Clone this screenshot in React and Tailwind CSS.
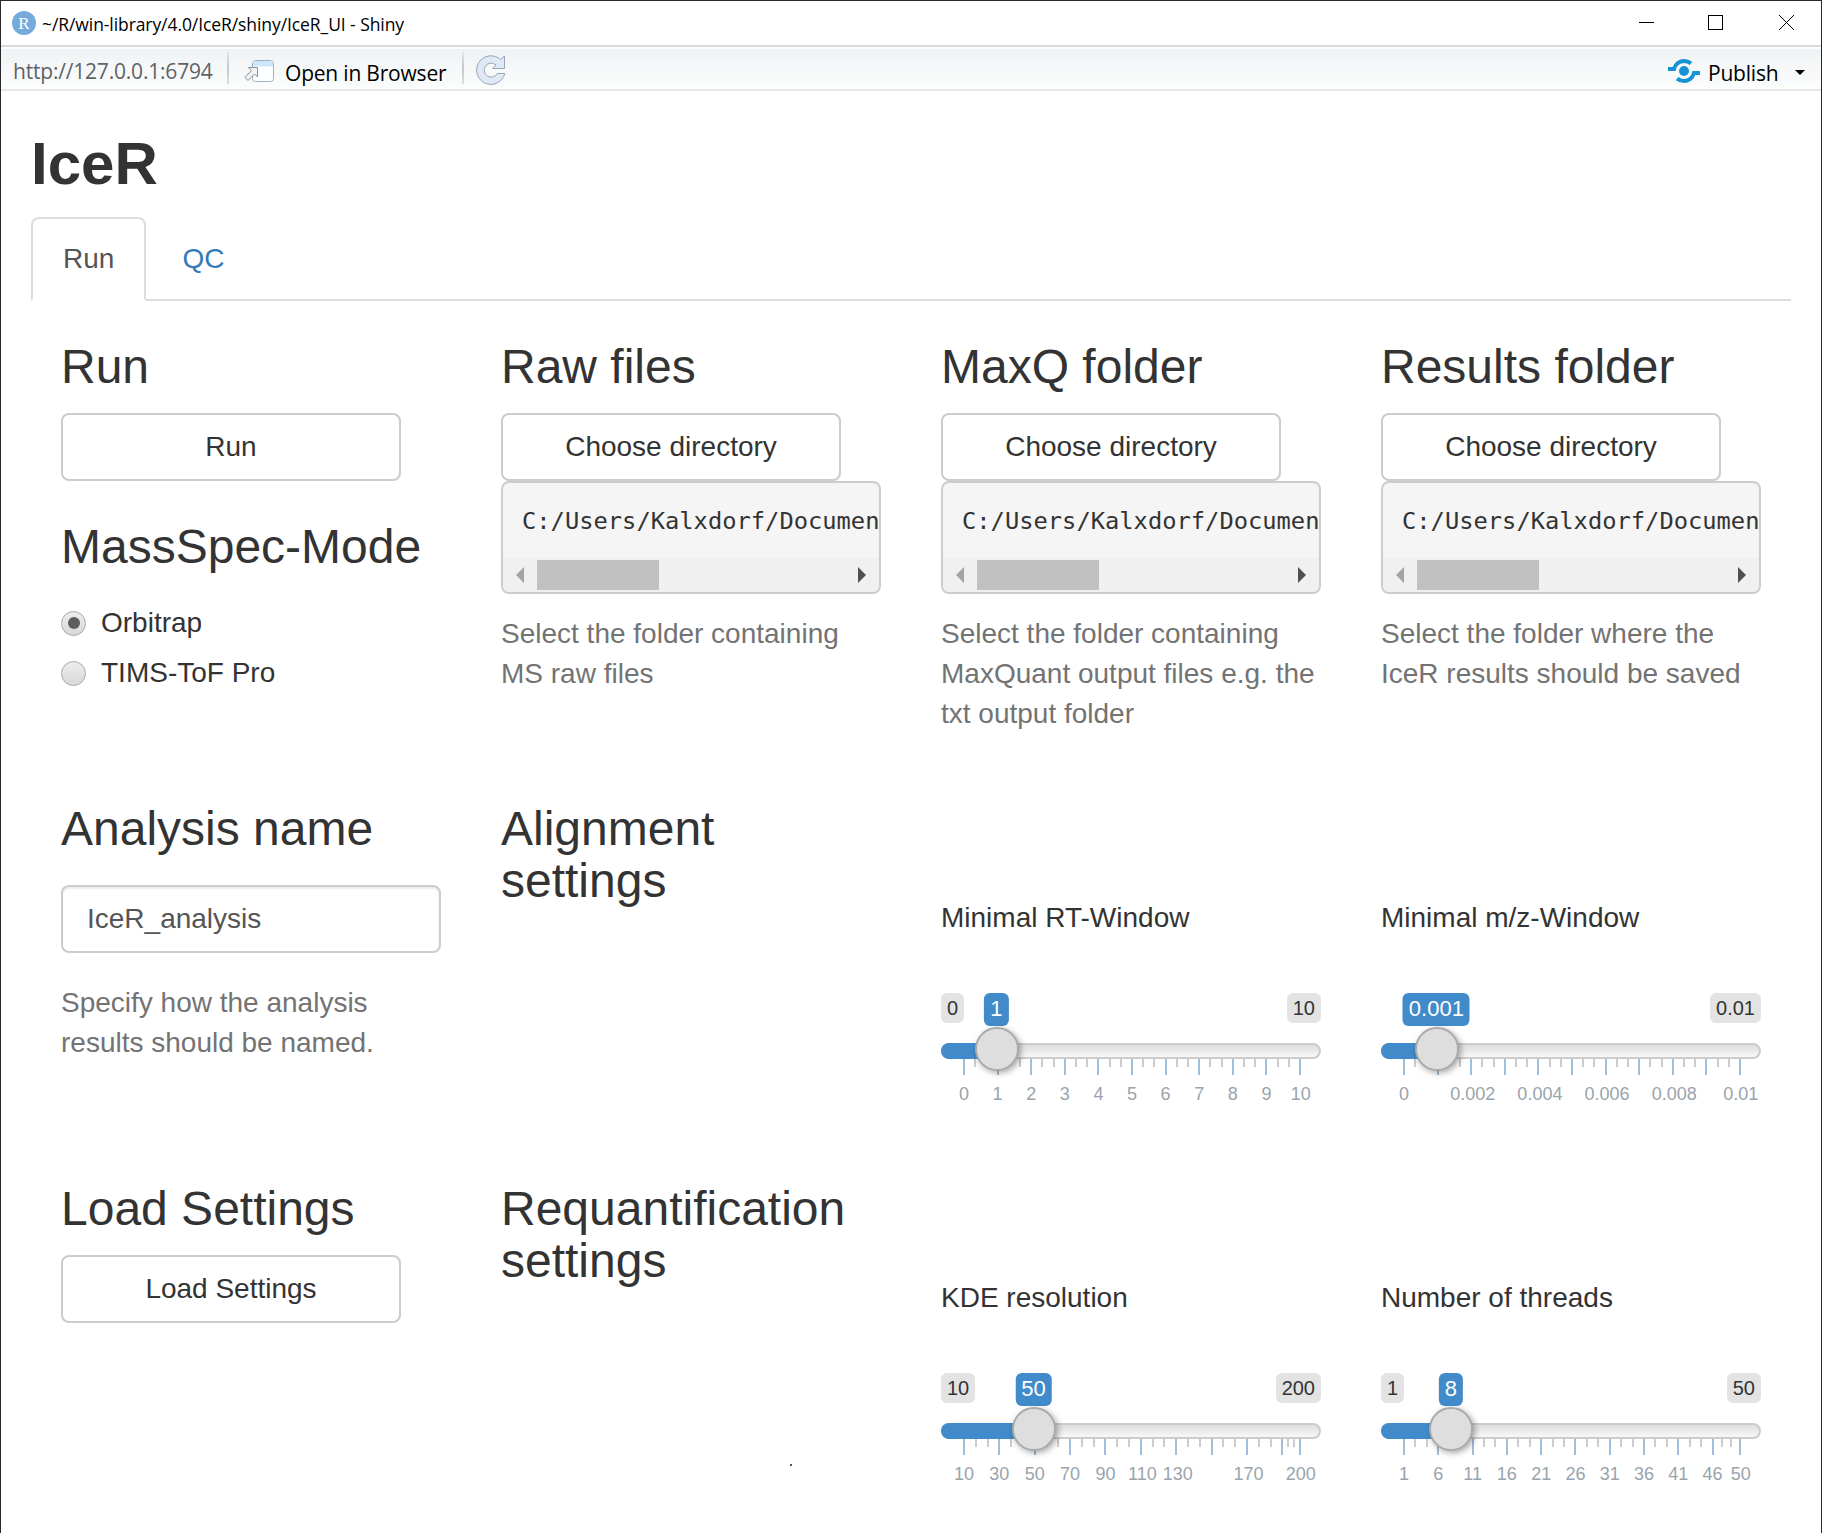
import React from "react";

const SANS = "font-['Liberation_Sans',Arial,sans-serif]";
const UI = "font-['Open_Sans','Noto_Sans',sans-serif]";

function TitleBar() {
  return (
    <div className={`flex h-11 shrink-0 items-center bg-white pl-[11px] text-black ${UI}`}>
      <div className="flex h-6 w-6 items-center justify-center rounded-full bg-[#75aadb] font-['Liberation_Serif',serif] text-[17px] leading-none text-white">
        R
      </div>
      <span className="ml-[6px] mt-[3px] whitespace-nowrap text-[17.5px] leading-none tracking-[-0.08px]">
        ~/R/win-library/4.0/IceR/shiny/IceR_UI - Shiny
      </span>
      <svg className="ml-auto" width="184" height="44" viewBox="1637 1 184 44" fill="none" stroke="#000" strokeWidth="1">
        <path d="M1639 22.5h15" />
        <rect x="1708.5" y="15.5" width="14" height="14" />
        <path d="M1779 15l15 15M1794 15l-15 15" />
      </svg>
    </div>
  );
}

function Divider({ className }) {
  return <div className={`h-8 w-[2px] bg-linear-to-b from-[#e4e6e8] via-[#c4c7ca] to-[#dcdfe1] ${className}`} />;
}

function ToolBar() {
  return (
    <div className={`flex h-[46px] shrink-0 items-center border-t-2 border-b-2 border-t-[#d9dadb] border-b-[#e6e8ea] bg-linear-to-b from-[#eff2f4] to-[#fcfdfd] pl-3 text-black shadow-[inset_0_2px_0_#fbfcfc] ${UI}`}>
      <span className="mt-[7px] w-[201px] whitespace-nowrap text-[21px] leading-none tracking-[-0.2px] text-[#5f6366]">http://127.0.0.1:6794</span>
      <Divider className="ml-[13px]" />
      <svg className="ml-[14px] mt-[6px]" width="32" height="26" viewBox="0 0 32 26">
        <rect x="9.5" y="2.5" width="21" height="21" rx="3" fill="#fdfeff" stroke="#9fb0c4" />
        <path d="M10 8.500V5.600A2.600 2.600 0 0 1 12.600 3h14.800A2.600 2.600 0 0 1 30 5.600v2.900z" fill="#cfe6fa" />
        <path d="M5.500 9.500h9v9.500l-3-3L5 22.500l-3.200-3.200L8.500 12.700z" fill="#f2f3f5" stroke="#8b9099" />
      </svg>
      <span className="ml-[10px] mt-[10px] w-[161px] whitespace-nowrap text-[21px] leading-none tracking-[-0.2px]">Open in Browser</span>
      <Divider className="ml-4" />
      <svg className="ml-[11px] mt-1" width="32" height="32" viewBox="0 0 32 32">
        <path
          d="M29.500 2V14.500H17.500L21 11A7 7 0 1 0 22.300 19.500H29.800A14.300 14.300 0 1 1 25.500 5.500z"
          fill="#e1e8f5"
          stroke="#9aa5b8"
        />
      </svg>
      <svg className="ml-auto mt-[6px]" width="34" height="28" viewBox="0 0 34 28" fill="none" stroke="#1593d6">
        <circle cx="17" cy="14" r="5" fill="#1593d6" stroke="none" />
        <path d="M1 12h6C8.500 6.500 13 4 17 4c3 0 5 .8 7 2.300" strokeWidth="4" />
        <path d="M33 16h-6C25.500 21.500 21 24 17 24c-3 0-5-.8-7-2.300" strokeWidth="4" />
      </svg>
      <span className="ml-[7px] mt-[10px] w-[71px] whitespace-nowrap text-[21px] leading-none tracking-[-0.2px]">Publish</span>
      <svg className="ml-4 mt-[9px] mr-4" width="10" height="5" viewBox="0 0 10 5">
        <path d="M0 0h10L5 5z" fill="#000" />
      </svg>
    </div>
  );
}

function Heading({ children }) {
  return <h3 className="mt-10 mb-[19.400px] text-5xl leading-[52.8px] font-normal">{children}</h3>;
}

function Button({ children }) {
  return (
    <button className="block h-[68px] w-[340px] rounded-lg border-2 border-[#ccc] bg-white text-center leading-10">
      {children}
    </button>
  );
}

function Help({ children, className = "" }) {
  return <p className={`text-[#737373] ${className}`}>{children}</p>;
}

function Radio({ label, checked }) {
  return (
    <label className="flex h-10 items-center">
      <span className="mt-[1px] flex h-[25px] w-[25px] items-center justify-center rounded-full border border-[#a9a9a9] bg-linear-to-b from-[#ededed] to-[#d9d9d9]">
        {checked && <span className="h-3 w-3 rounded-full bg-[#5e5e5e]" />}
      </span>
      <span className="ml-[15px]">{label}</span>
    </label>
  );
}

function DirectoryColumn({ title, help }) {
  return (
    <section className="w-[380px]">
      <Heading>{title}</Heading>
      <Button>Choose directory</Button>
      <div className="h-[112.400px] overflow-hidden rounded-lg border-2 border-[#ccc] bg-[#f5f5f5]">
        <pre className="h-[75px] overflow-hidden pl-[19px] pt-[17.400px] font-['DejaVu_Sans_Mono',monospace] text-[23.75px] leading-10">
          C:/Users/Kalxdorf/Documen
        </pre>
        <div className="flex h-[34px] items-center bg-[#f0f0f0] pr-[13px] pl-[13px]">
          <svg width="8" height="16" viewBox="0 0 8 16"><path d="M8 0v16L0 8z" fill="#a3a3a3" /></svg>
          <div className="ml-[13px] h-[30px] w-[122px] bg-[#c1c1c1]" />
          <svg className="ml-auto" width="8" height="16" viewBox="0 0 8 16"><path d="M0 0v16l8-8z" fill="#505050" /></svg>
        </div>
      </div>
      <Help className="mt-5">{help}</Help>
    </section>
  );
}

function Slider({ label, min, max, step, value, labels }) {
  const at = (v) => 23 + ((v - min) / (max - min)) * 336;
  const majors = [];
  for (let i = 0; min + i * step < max - step * 0.01; i++) majors.push(min + i * step);
  majors.push(max);
  const minors = majors.slice(0, -1).flatMap((m, i) => {
    const gap = (majors[i + 1] - m) / 3;
    return [m + gap, m + 2 * gap];
  });
  const shown = labels.map((n) => ({ n, nudge: n === max ? 0.7 : String(n).length > 2 ? 1.5 : 0 }));
  const x = at(value);
  const overlapsMin = x < 60 && String(value).length > 3;
  return (
    <section className="w-[380px] pt-[135.400px]">
      <div>{label}</div>
      <div className="relative mt-[55.400px] h-[120px]">
        <div className="flex justify-between text-xl leading-[30px]">
          <span className={overlapsMin ? "invisible" : "rounded-md bg-[#e3e3e3] px-[6px]"}>{min}</span>
          <span className="rounded-md bg-[#e3e3e3] px-[6px]">{max}</span>
        </div>
        <div className="mt-5 h-4 overflow-hidden rounded-full border-2 border-[#ccc] bg-linear-to-b from-[#dedede] to-[#f8f8f8]" />
        <div className="absolute top-[50px] left-0 h-4 rounded-l-full bg-[#428bca]" style={{ width: x }} />
        {minors.map((m) => (
          <i key={`s${m}`} className="absolute top-[66px] h-2 w-[2px] bg-[#ccc]" style={{ left: Math.round(at(m) - 1) }} />
        ))}
        {majors.map((m) => (
          <i key={`b${m}`} className="absolute top-[66px] h-4 w-[2px] bg-[#9fc0dc]" style={{ left: Math.round(at(m) - 1) }} />
        ))}
        {shown.map(({ n, nudge }) => (
          <span key={n} className="absolute top-[91px] -translate-x-1/2 text-lg leading-5 text-[#99a4ac]" style={{ left: at(n) + nudge }}>
            {n}
          </span>
        ))}
        <span className="absolute top-0 h-[33px] -translate-x-1/2 rounded-md bg-[#428bca] px-[6px] text-[22px] leading-[32px] text-white" style={{ left: x - 1.2 }}>
          {value}
        </span>
        <span
          className="absolute top-[34px] h-11 w-11 -translate-x-1/2 rounded-full border-2 border-[#ababab] bg-[#dedede] shadow-[2px_2px_6px_rgba(0,0,0,0.35)]"
          style={{ left: x - 0.6 }}
        />
      </div>
    </section>
  );
}

export default function App() {
  return (
    <div className={`flex h-[1533px] w-[1822px] flex-col overflow-hidden border-x border-t border-[#26282b] bg-white text-[28px] leading-10 text-[#333] ${SANS}`}>
      <TitleBar />
      <ToolBar />
      <main className="flex flex-col px-[30px]">
        <h2 className="mt-10 mb-5 text-6xl leading-[66px] font-bold">IceR</h2>
        <nav className="flex h-[84px] border-b-2 border-[#ddd]">
          <a className="h-[84px] rounded-t-lg border-2 border-[#ddd] border-b-white bg-white px-[30px] pt-5 text-[#555]">Run</a>
          <a className="ml-1 px-8 pt-[22px] text-[#337ab7]">QC</a>
        </nav>

        <div className="grid h-[461.600px] grid-cols-[repeat(4,440px)] pl-[30px]">
          <section className="w-[380px]">
            <Heading>Run</Heading>
            <Button>Run</Button>
            <Heading>MassSpec-Mode</Heading>
            <div className="flex flex-col gap-[10px] pt-[9.400px]">
              <Radio label="Orbitrap" checked />
              <Radio label="TIMS-ToF Pro" />
            </div>
          </section>
          <DirectoryColumn title="Raw files" help="Select the folder containing MS raw files" />
          <DirectoryColumn title="MaxQ folder" help="Select the folder containing MaxQuant output files e.g. the txt output folder" />
          <DirectoryColumn title="Results folder" help="Select the folder where the IceR results should be saved" />
        </div>

        <div className="grid h-[380px] grid-cols-[repeat(4,440px)] pl-[30px]">
          <section className="w-[380px]">
            <Heading>Analysis name</Heading>
            <div className="mt-[30px] flex h-[68px] items-center rounded-lg border-2 border-[#ccc] px-6 text-[#555] shadow-[inset_0_2px_2px_rgba(0,0,0,0.075)]">
              IceR_analysis
            </div>
            <Help className="mt-[29.600px]">Specify how the analysis results should be named.</Help>
          </section>
          <section className="w-[380px]">
            <Heading>Alignment settings</Heading>
          </section>
          <Slider label="Minimal RT-Window" min={0} max={10} step={1} value={1} labels={[0, 1, 2, 3, 4, 5, 6, 7, 8, 9, 10]} />
          <Slider label="Minimal m/z-Window" min={0} max={0.01} step={0.001} value={0.001} labels={[0, 0.002, 0.004, 0.006, 0.008, 0.01]} />
        </div>

        <div className="grid h-[380px] grid-cols-[repeat(4,440px)] pl-[30px]">
          <section className="w-[380px]">
            <Heading>Load Settings</Heading>
            <Button>Load Settings</Button>
          </section>
          <section className="relative w-[380px]">
            <Heading>Requantification settings</Heading>
            <i className="absolute top-[321px] left-[289px] h-[2px] w-[2px] bg-[#555]" />
          </section>
          <Slider label="KDE resolution" min={10} max={200} step={20} value={50} labels={[10, 30, 50, 70, 90, 110, 130, 170, 200]} />
          <Slider label="Number of threads" min={1} max={50} step={5} value={8} labels={[1, 6, 11, 16, 21, 26, 31, 36, 41, 46, 50]} />
        </div>
      </main>
    </div>
  );
}
